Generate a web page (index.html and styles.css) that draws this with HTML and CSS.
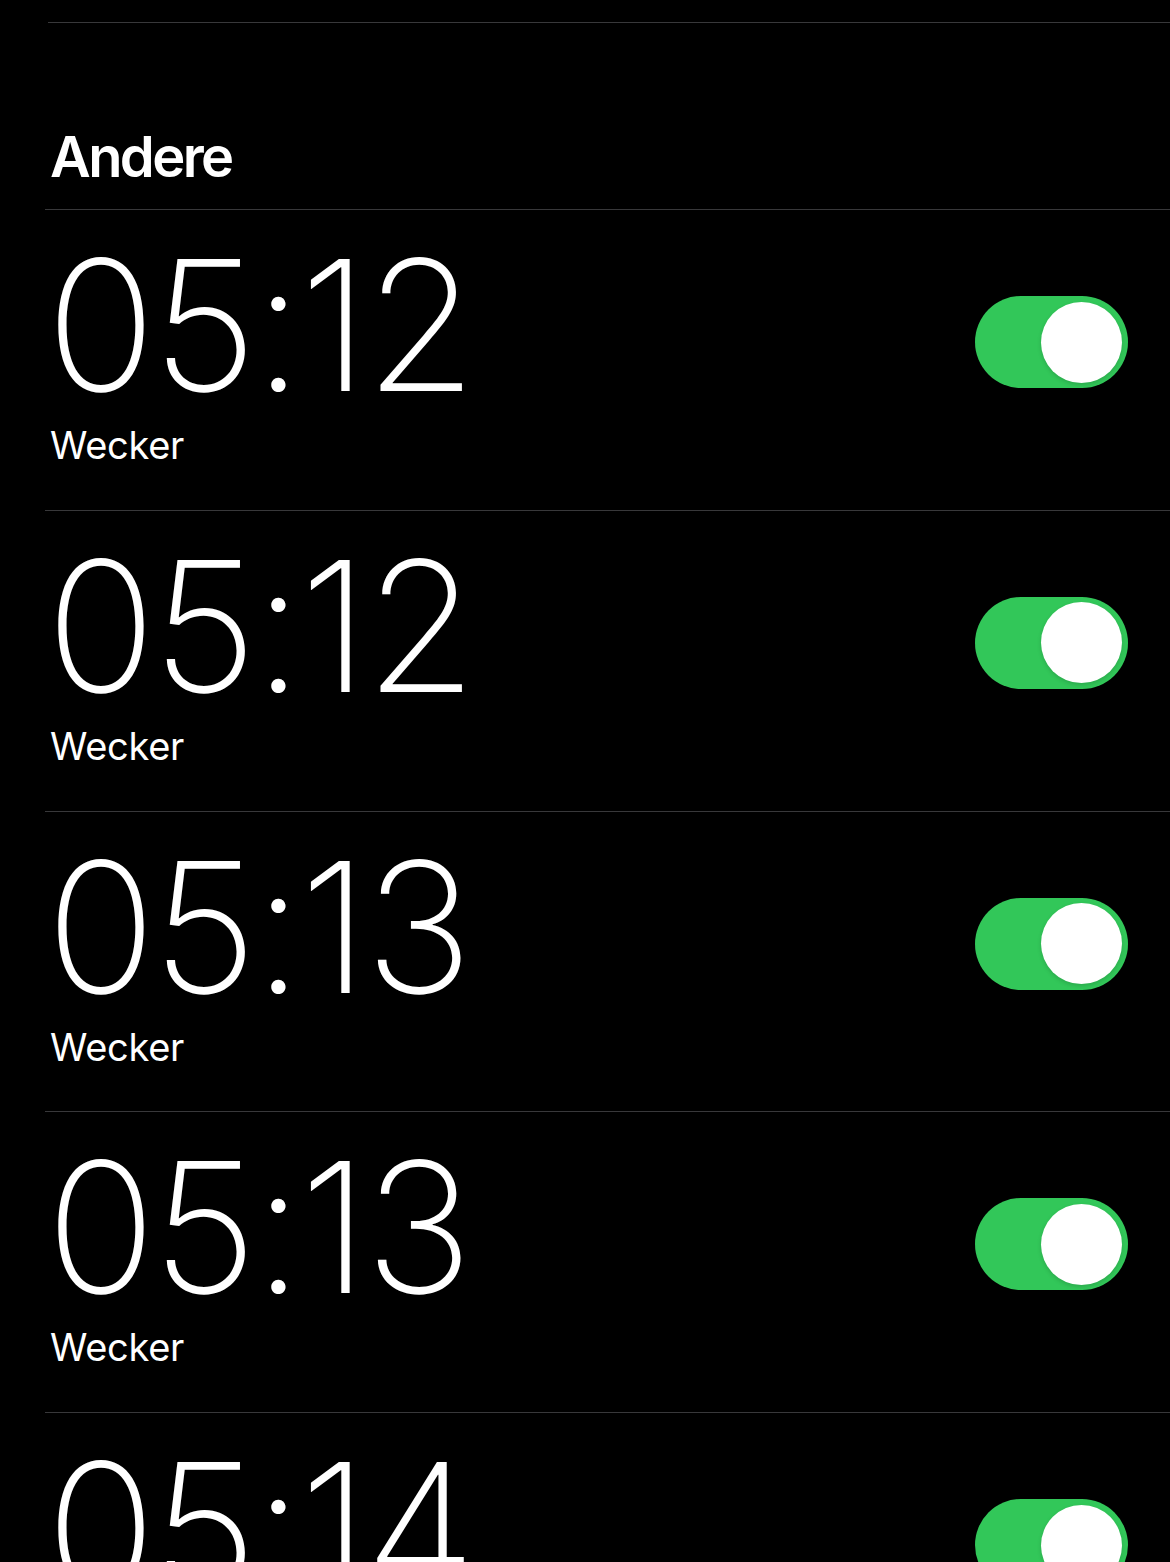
FILE: index.html
```html
<!DOCTYPE html>
<html lang="de">
<head>
<meta charset="utf-8">
<title>Wecker</title>
<link rel="stylesheet" href="styles.css">
</head>
<body>
<div class="page">
  <div class="top-rule"></div>
  <h2 class="section-title">Andere</h2>
  <ul class="alarms">
    <li class="alarm">
      <div class="alarm-text">
        <div class="time">05:12</div>
        <div class="label">Wecker</div>
      </div>
      <div class="switch"><div class="knob"></div></div>
    </li>
    <li class="alarm">
      <div class="alarm-text">
        <div class="time">05:12</div>
        <div class="label">Wecker</div>
      </div>
      <div class="switch"><div class="knob"></div></div>
    </li>
    <li class="alarm">
      <div class="alarm-text">
        <div class="time">05:13</div>
        <div class="label">Wecker</div>
      </div>
      <div class="switch"><div class="knob"></div></div>
    </li>
    <li class="alarm">
      <div class="alarm-text">
        <div class="time">05:13</div>
        <div class="label">Wecker</div>
      </div>
      <div class="switch"><div class="knob"></div></div>
    </li>
    <li class="alarm">
      <div class="alarm-text">
        <div class="time">05:14</div>
        <div class="label">Wecker</div>
      </div>
      <div class="switch"><div class="knob"></div></div>
    </li>
  </ul>
</div>
</body>
</html>
```
FILE: styles.css
```css
html, body {
  margin: 0;
  padding: 0;
  background: #000;
  height: 100%;
  overflow: hidden;
}
body {
  font-family: Inter, "Liberation Sans", sans-serif;
  color: #fff;
}
.page {
  padding-top: 22px;
}
.top-rule {
  margin-left: 48px;
  height: 1px;
  background: #38383a;
}
.section-title {
  margin: 0 0 0 45px;
  padding: 106px 0 0 5px;
  box-sizing: border-box;
  height: 187px;
  font-size: 56px;
  line-height: 56px;
  font-weight: 600;
  letter-spacing: -2.6px;
  border-bottom: 1px solid #38383a;
}
.alarms {
  list-style: none;
  margin: 0 0 0 45px;
  padding: 0;
}
.alarm {
  display: flex;
  justify-content: space-between;
  align-items: flex-start;
  height: 299.75px;
  border-bottom: 1px solid #38383a;
  padding-left: 5px;
  padding-right: 42px;
}
.alarm-text {
  display: flex;
  flex-direction: column;
}
.time {
  font-size: 182px;
  font-weight: 170;
  line-height: 182px;
  letter-spacing: -4px;
  margin-top: 24px;
  margin-left: -4px;
}
.label {
  font-size: 38px;
  line-height: 38px;
  margin-top: 10px;
  font-weight: 400;
  letter-spacing: -0.3px;
}
.switch {
  margin-top: 86px;
  width: 153px;
  height: 92px;
  border-radius: 46px;
  background: #32c759;
  display: flex;
  align-items: center;
  justify-content: flex-end;
  padding-right: 6px;
  box-sizing: border-box;
}
.knob {
  width: 81px;
  height: 81px;
  border-radius: 50%;
  background: #fff;
  box-shadow: 0 2px 4px rgba(0,0,0,0.15);
}
```
